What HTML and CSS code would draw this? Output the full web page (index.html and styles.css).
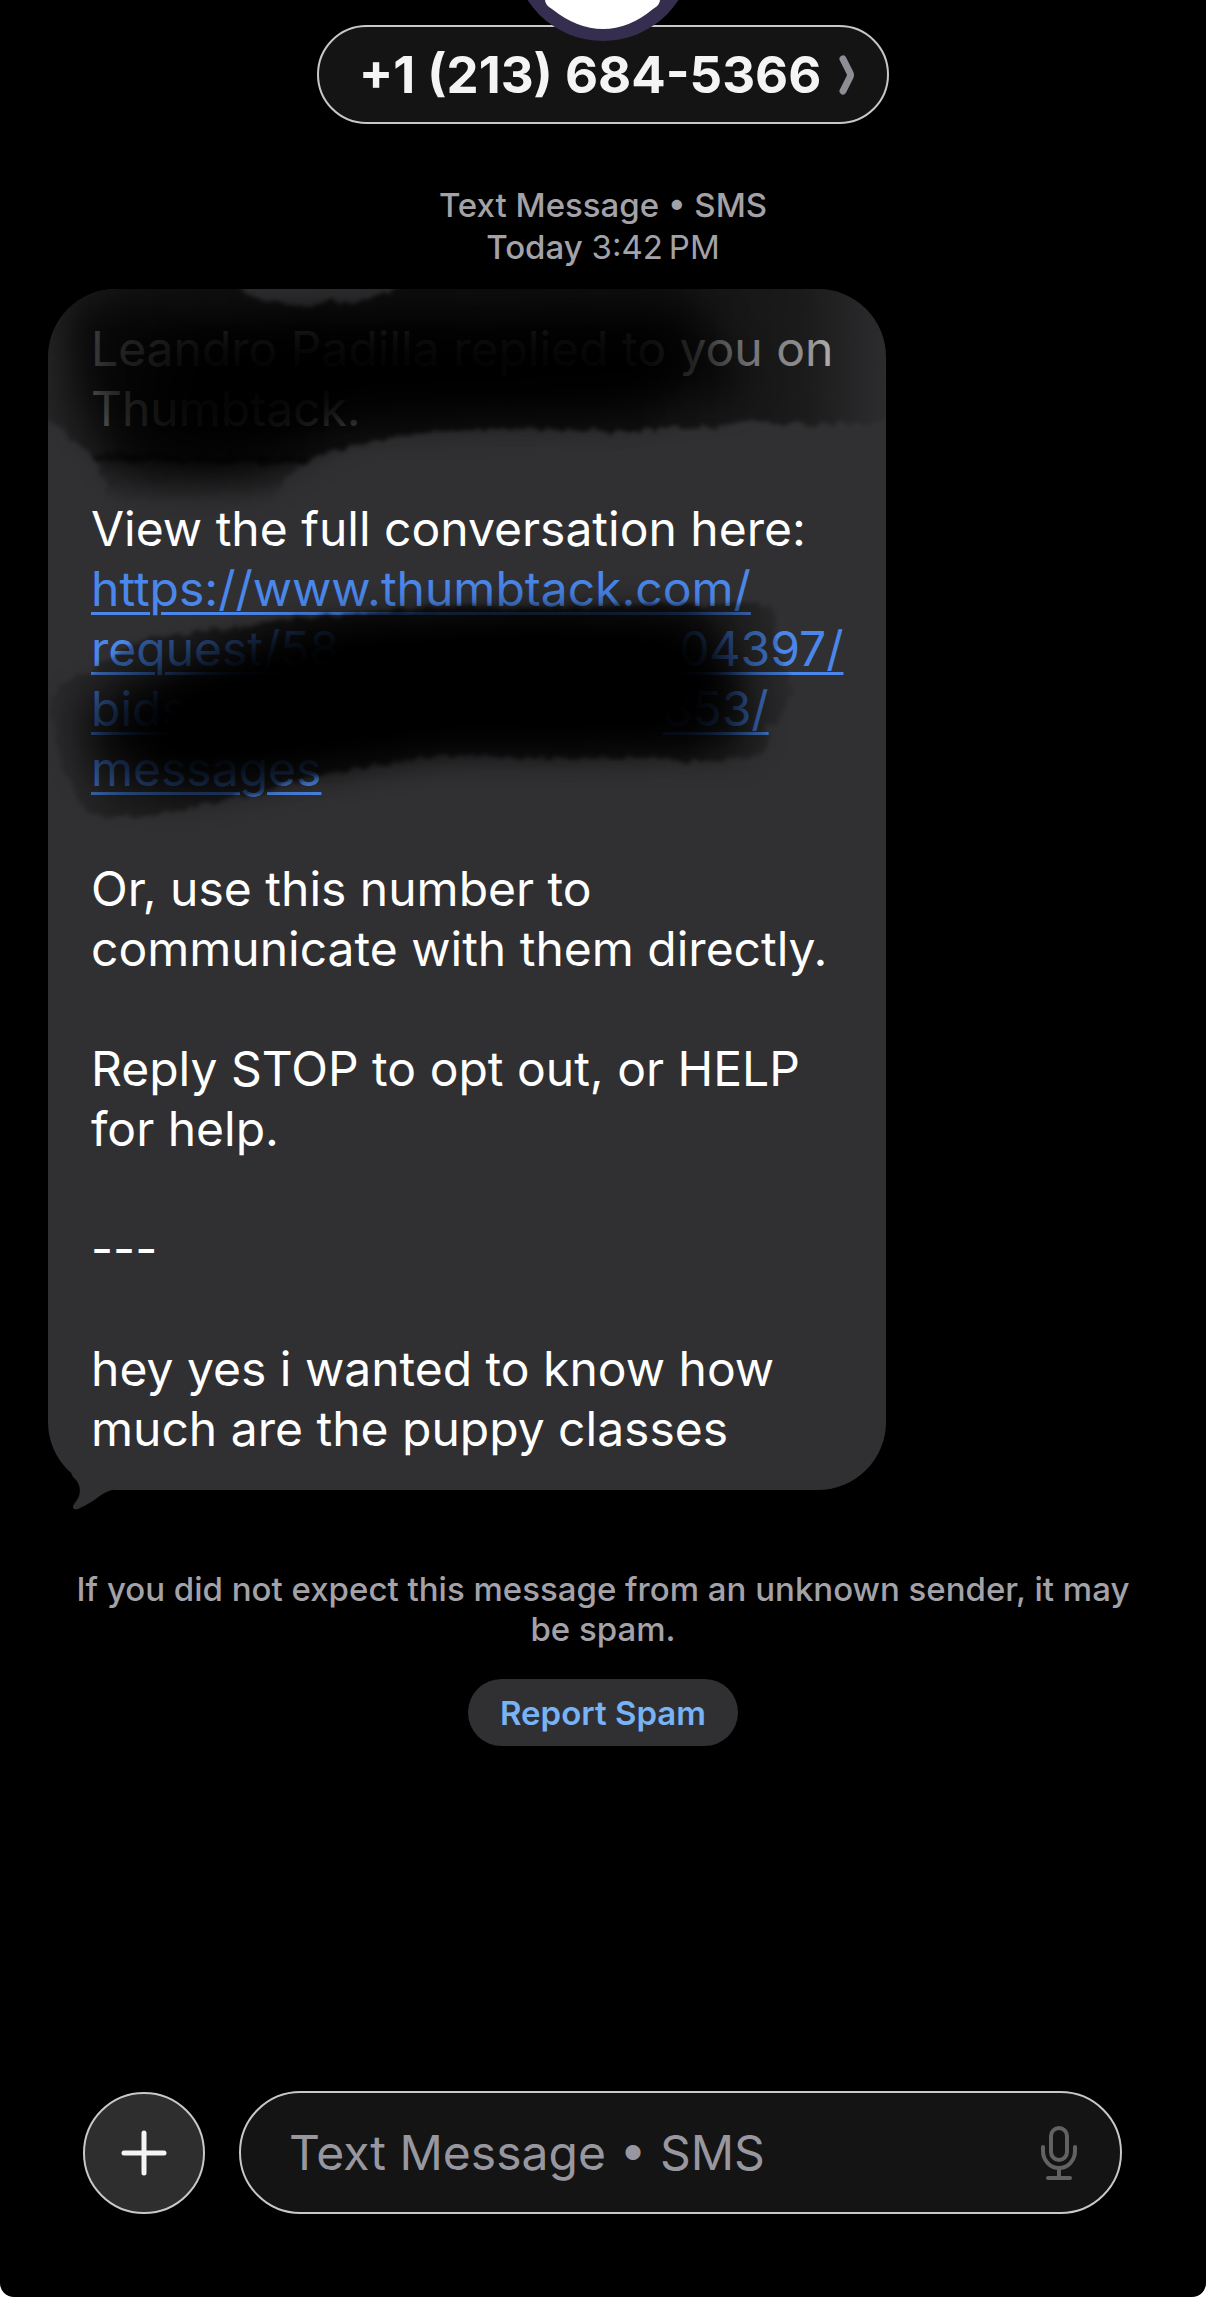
FILE: index.html
```
<!DOCTYPE html>
<html lang="en">
<head>
    <meta charset="UTF-8">
    <meta name="viewport" content="width=device-width, initial-scale=1.0">
    <title>Messages</title>
    <link rel="stylesheet" href="styles.css">
</head>
<body>
    <main class="screen">
        <header class="header">
            <a class="contact" href="#details">
                <span>+1 (213) 684-5366</span>
                <svg class="chevron" viewBox="0 0 16 40" aria-hidden="true">
                    <path d="M4 4 L11 18 Q12 20 11 22 L4 36" />
                </svg>
            </a>
            <svg class="avatar" viewBox="0 0 152 42" aria-hidden="true">
                <circle cx="76" cy="-49" r="90" fill="#352e4f" />
                <path d="M18 0 Q18 5 25 9 Q50 29 76 29 Q102 29 126 9 Q133 5 133 0 Z" fill="#fff" />
            </svg>
        </header>

        <section class="thread">
            <p class="stamp">Text Message • SMS<br>Today <time>3:42&#8201;PM</time></p>

            <article class="bubble">
                <p>Leandro Padilla replied to you on<br>Thumbtack.</p>
                <p>View the full conversation here:<br>
                    <a class="link" href="#conversation">https://www.thumbtack.com/<br>request/58<span class="gap"></span>04397/<br>bids<span class="gap long"></span>853/<br>messages</a></p>
                <p>Or, use this number to<br>communicate with them directly.</p>
                <p>Reply STOP to opt out, or HELP<br>for help.</p>
                <p>---</p>
                <p>hey yes i wanted to know how<br>much are the puppy classes</p>

                <!-- marker strokes over the private parts -->
                <div class="marker">
                    <svg viewBox="0 0 838 600" aria-hidden="true">
                        <defs>
                            <filter id="rough" x="-10%" y="-20%" width="120%" height="140%">
                                <feTurbulence type="fractalNoise" baseFrequency="0.09" numOctaves="4" seed="4" result="n" />
                                <feDisplacementMap in="SourceGraphic" in2="n" scale="12" xChannelSelector="R" yChannelSelector="G" />
                                <feGaussianBlur stdDeviation="2" />
                            </filter>
                            <filter id="soft" x="-20%" y="-40%" width="140%" height="180%">
                                <feGaussianBlur stdDeviation="20" />
                            </filter>
                            <linearGradient id="fade1" x1="0" x2="838" y1="0" y2="0" gradientUnits="userSpaceOnUse">
                                <stop offset="0" stop-opacity=".25" />
                                <stop offset=".1" stop-opacity=".6" />
                                <stop offset=".3" stop-opacity=".7" />
                                <stop offset=".7" stop-opacity=".65" />
                                <stop offset=".9" stop-opacity=".45" />
                                <stop offset="1" stop-opacity=".08" />
                            </linearGradient>
                            <linearGradient id="drip" x1="0" x2="0" y1="165" y2="214" gradientUnits="userSpaceOnUse">
                                <stop offset="0" stop-opacity=".5" />
                                <stop offset="1" stop-opacity="0" />
                            </linearGradient>
                            <linearGradient id="fade2" x1="0" x2="750" y1="0" y2="0" gradientUnits="userSpaceOnUse">
                                <stop offset="0" stop-opacity=".1" />
                                <stop offset=".1" stop-opacity=".35" />
                                <stop offset=".35" stop-opacity=".65" />
                                <stop offset=".85" stop-opacity=".6" />
                                <stop offset="1" stop-opacity=".1" />
                            </linearGradient>
                        </defs>
                        <path filter="url(#rough)" fill="url(#fade1)" d="M-20 -20 H178 Q200 10 223 13 Q260 20 285 12 Q315 14 330 8 Q350 3 369 -20 H860 V130 L824 133 Q760 138 695 131 Q680 140 655 136 Q600 145 543 141 L448 139 Q410 140 375 144 Q340 148 319 154 Q285 160 257 174 L50 172 Q20 150 -20 115 Z" />
                        <path filter="url(#rough)" fill="url(#drip)" d="M46 165 L68 220 H215 Q240 190 257 168 Z" />
                        <path filter="url(#soft)" opacity=".65" d="M130 44 L380 44 L600 36 L640 75 L590 116 L420 112 L290 118 L190 160 L130 160 L100 130 Z" />
                        <path filter="url(#soft)" opacity=".7" d="M20 10 L200 24 L640 10 L700 100 L560 118 L300 130 L200 190 H90 L30 110 Z" />
                        <path filter="url(#soft)" opacity=".7" d="M110 80 L300 60 H600 L580 100 L240 104 L150 120 Z" />

                        <path filter="url(#rough)" fill="url(#fade2)" d="M94 349 L167 341 L257 328 L375 319 L487 318 L644 316 L706 314 Q732 318 728 331 L734 378 Q750 395 742 408 Q736 430 717 438 Q726 462 706 468 L655 471 L543 469 L459 468 L397 465 L341 474 L279 484 L206 504 L122 524 L66 529 Q36 528 32 511 L16 478 L2 428 Q2 405 10 398 L44 381 Z" />
                        <path filter="url(#soft)" d="M220 364 L310 344 L480 332 L620 340 L656 370 L672 410 L650 444 L540 452 L400 450 L280 466 L150 484 L100 470 L76 430 L120 402 Z" />
                        <path filter="url(#soft)" opacity=".7" d="M180 362 L300 342 L640 330 L680 350 L696 430 L700 456 L400 452 L250 478 L130 502 L50 490 L30 420 L100 390 Z" />
                        <path filter="url(#soft)" opacity=".7" d="M240 370 L620 350 L660 420 L400 440 L150 460 L100 420 Z" />
                    </svg>
                </div>
                <svg class="tail" viewBox="0 0 64 64" aria-hidden="true">
                    <path d="M21 22 L25 31 C34 38 34 50 26 58 C23 63 27 65 32 62 C45 57 54 46 64 44 V22 Z" />
                </svg>
            </article>

            <p class="notice">If you did not expect this message from an unknown sender, it may be spam.</p>
            <button class="report" type="button">Report Spam</button>
        </section>

        <form class="compose">
            <button class="add" type="button" aria-label="Add attachment">
                <svg viewBox="0 0 46 46" aria-hidden="true"><path d="M23 3 V43 M3 23 H43" /></svg>
            </button>
            <div class="field">
                <input type="text" aria-label="Text Message" placeholder="Text Message • SMS">
                <button class="mic" type="button" aria-label="Dictate">
                    <svg viewBox="0 0 36 54" aria-hidden="true">
                        <rect x="10" y="2" width="16" height="32" rx="8" />
                        <path d="M2 21 V25 A16 17 0 0 0 34 25 V21 M18 42 V51 M7 52 H29" />
                    </svg>
                </button>
            </div>
        </form>
    </main>
</body>
</html>
```
FILE: styles.css
```
* {
    box-sizing: border-box;
}
body {
    margin: 0;
    background-color: #fff;
    font-family: Inter, "Liberation Sans", sans-serif;
}
p {
    margin: 0;
}
button {
    padding: 0;
    border: none;
    font-family: inherit;
    cursor: pointer;
}
.screen {
    display: flex;
    flex-direction: column;
    min-height: 100vh;
    padding-bottom: 83px;
    background-color: #000;
    border-radius: 0 0 14px 14px;
    overflow: hidden;
}

/* contact pill */
.header {
    position: relative;
    display: flex;
    justify-content: center;
    padding-top: 25px;
}
.contact {
    display: flex;
    align-items: center;
    gap: 18px;
    height: 99px;
    padding: 0 32px 0 40px;
    border: 2px solid #c8c8c8;
    border-radius: 50px;
    background-color: #141414;
    color: #f4f4f4;
    font-size: 51px;
    font-weight: 700;
    text-decoration: none;
}
.chevron {
    width: 16px;
    height: 40px;
    fill: none;
    stroke: #8e8d95;
    stroke-width: 7;
    stroke-linecap: round;
}
.avatar {
    position: absolute;
    top: 0;
    left: 50%;
    width: 152px;
    height: 42px;
    transform: translateX(-50%);
}

/* messages */
.thread {
    display: flex;
    flex-direction: column;
    align-items: center;
    padding: 60px 48px;
}
.stamp {
    margin-bottom: 21px;
    color: #a3a2a8;
    font-size: 33px;
    font-weight: 500;
    line-height: 42px;
    text-align: center;
}
.stamp time {
    font-weight: 400;
}
.bubble {
    position: relative;
    align-self: flex-start;
    display: flex;
    flex-direction: column;
    gap: 60px;
    width: 100%;
    max-width: 838px;
    padding: 30px 43px 31px;
    border-radius: 68px;
    background-color: #303032;
    color: #fff;
    font-size: 48px;
    line-height: 60px;
    white-space: nowrap;
}
.link {
    color: #4b87ea;
    text-decoration-thickness: 3px;
    text-underline-offset: 6px;
}
.gap {
    display: inline-block;
    width: 340px;
}
.gap.long {
    width: 476px;
}
.marker {
    position: absolute;
    inset: 0;
    border-radius: inherit;
    overflow: hidden;
    pointer-events: none;
}
.marker svg {
    display: block;
    width: 838px;
    height: 600px;
}
.tail {
    position: absolute;
    bottom: -20px;
    left: 0;
    width: 64px;
    height: 64px;
    fill: #303032;
}
.notice {
    max-width: 1090px;
    margin-top: 79px;
    color: #a3a2a8;
    font-size: 33px;
    font-weight: 500;
    line-height: 40px;
    text-align: center;
}
.report {
    height: 67px;
    margin-top: 30px;
    padding: 0 32px;
    border-radius: 34px;
    background-color: #303032;
    color: #78b3f6;
    font-size: 33px;
    font-weight: 600;
}

/* compose bar */
.compose {
    display: flex;
    align-items: center;
    gap: 34px;
    margin-top: auto;
    padding: 0 84px 0 83px;
}
.add {
    display: flex;
    align-items: center;
    justify-content: center;
    flex: none;
    width: 122px;
    height: 122px;
    border: 2px solid #c8c8c8;
    border-radius: 50%;
    background-color: #2e2e2e;
}
.add svg {
    width: 46px;
    height: 46px;
    fill: none;
    stroke: #f4f4f4;
    stroke-width: 5;
    stroke-linecap: round;
}
.field {
    display: flex;
    align-items: center;
    flex: 1;
    min-width: 0;
    height: 123px;
    padding: 0 43px 0 48px;
    border: 2px solid #c8c8c8;
    border-radius: 62px;
    background-color: #141414;
}
.field input {
    flex: 1;
    min-width: 0;
    padding: 0;
    border: none;
    outline: none;
    background: none;
    color: #fff;
    font-family: inherit;
    font-size: 48px;
}
.field input::placeholder {
    color: #98979f;
    opacity: 1;
}
.mic {
    background: none;
}
.mic svg {
    display: block;
    width: 36px;
    height: 54px;
    fill: none;
    stroke: #626263;
    stroke-width: 4;
    stroke-linecap: round;
}
```
